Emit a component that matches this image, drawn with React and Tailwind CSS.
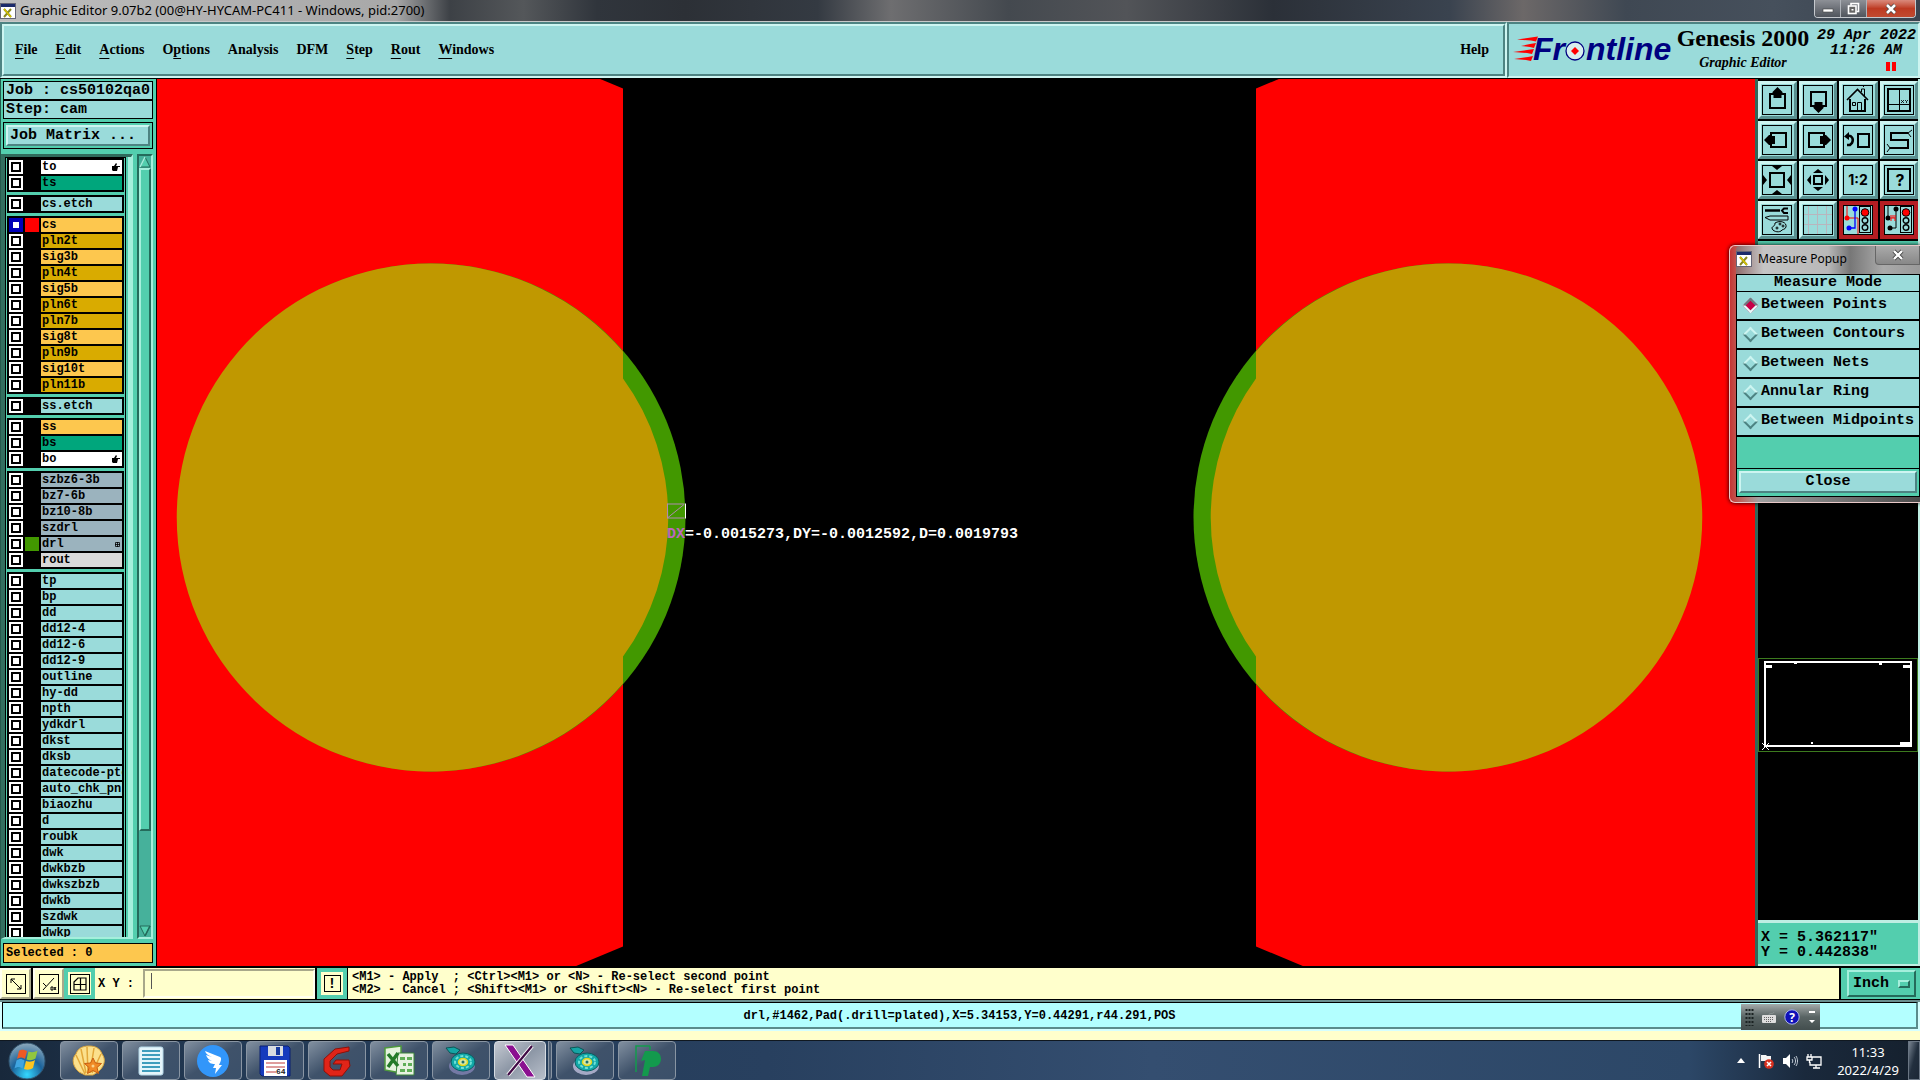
import React, { useState } from "react";

const MONO = "font-['Liberation_Mono',monospace] font-bold";
const SERIF = "font-['Liberation_Serif',serif] font-bold";
const SANS = "font-['Noto_Sans',sans-serif]";
const RAISED = "border-2 border-t-[#cdf5f1] border-l-[#cdf5f1] border-r-[#4d8382] border-b-[#4d8382]";
const SUNKEN = "border-2 border-t-[#4d8382] border-l-[#4d8382] border-r-[#cdf5f1] border-b-[#cdf5f1]";

const menus = [
    { label: "File", key: 0 },
    { label: "Edit", key: 0 },
    { label: "Actions", key: 0 },
    { label: "Options", key: 1 },
    { label: "Analysis", key: -1 },
    { label: "DFM", key: -1 },
    { label: "Step", key: 0 },
    { label: "Rout", key: 0 },
    { label: "Windows", key: 0 },
];

const kinds = {
    white: "bg-white",
    mask: "bg-[#00a67c]",
    misc: "bg-[#9adbda]",
    signal: "bg-[#fdc74e]",
    power: "bg-[#d9ab00]",
    drill: "bg-[#9bb3be]",
    rout: "bg-[#d9d9d9]",
};

const layerGroups = [
    [
        { name: "to", kind: "white", mark: "hand" },
        { name: "ts", kind: "mask" },
    ],
    [{ name: "cs.etch", kind: "misc" }],
    [
        { name: "cs", kind: "signal", color: "bg-[#ff0000]", work: true },
        { name: "pln2t", kind: "power" },
        { name: "sig3b", kind: "signal" },
        { name: "pln4t", kind: "power" },
        { name: "sig5b", kind: "signal" },
        { name: "pln6t", kind: "power" },
        { name: "pln7b", kind: "power" },
        { name: "sig8t", kind: "signal" },
        { name: "pln9b", kind: "power" },
        { name: "sig10t", kind: "signal" },
        { name: "pln11b", kind: "power" },
    ],
    [{ name: "ss.etch", kind: "misc" }],
    [
        { name: "ss", kind: "signal" },
        { name: "bs", kind: "mask" },
        { name: "bo", kind: "white", mark: "hand" },
    ],
    [
        { name: "szbz6-3b", kind: "drill" },
        { name: "bz7-6b", kind: "drill" },
        { name: "bz10-8b", kind: "drill" },
        { name: "szdrl", kind: "drill" },
        { name: "drl", kind: "drill", color: "bg-[#429800]", mark: "grid" },
        { name: "rout", kind: "rout" },
    ],
    [
        "tp", "bp", "dd", "dd12-4", "dd12-6", "dd12-9", "outline", "hy-dd", "npth", "ydkdrl", "dkst", "dksb",
        "datecode-ptc", "auto_chk_pnl", "biaozhu", "d", "roubk", "dwk", "dwkbzb", "dwkszbzb", "dwkb", "szdwk", "dwkp",
    ].map((name) => ({ name, kind: "misc" })),
];

const modes = ["Between Points", "Between Contours", "Between Nets", "Annular Ring", "Between Midpoints"];

function XIcon() {
    return (
        <svg className="h-4 w-4 shrink-0" viewBox="0 0 16 16">
            <rect x="0.5" y="0.5" width="15" height="15" fill="#fff" stroke="#667" />
            <rect x="1" y="1" width="14" height="3" fill="#1b2a6b" />
            <path d="M4 6l7 8M11 6l-7 8" stroke="#8a8a20" strokeWidth="2" />
            <path d="M4 6l7 8" stroke="#d8c400" strokeWidth="1.4" />
        </svg>
    );
}

function TitleBar() {
    return (
        <header className={`${SANS} relative flex h-[22px] shrink-0 items-center border-b border-[#c8c8c8] bg-[#3d4146] text-[13px] text-black`}>
            <div className="flex h-full w-[450px] items-center gap-1 bg-linear-to-r from-[#bdbdbd] via-[#a8a8a8] via-88% to-[#3d4146]">
                <XIcon />
                <h1 className="whitespace-nowrap">Graphic Editor 9.07b2 (00@HY-HYCAM-PC411 - Windows, pid:2700)</h1>
            </div>
            <div className="h-full flex-1 bg-[linear-gradient(90deg,#3d4146_0%,#54575a_5%,#30353c_10%,#2c3036_16%,#343a42_25%,#6e6e70_30%,#44494f_38%,#525458_46%,#2b3038_56%,#3a434f_68%,#6c6868_73%,#3f4853_80%,#46505c_90%,#39434f_100%)]" />
            <div className="absolute top-0 right-1 flex h-[18px] w-[102px] overflow-hidden rounded-b border border-t-0 border-[#c5c9ce]">
                <button aria-label="Minimize" className="flex flex-1 items-center justify-center border-r border-[#aeb2b8] bg-linear-to-b from-[#8d9096] to-[#50555d]">
                    <svg width="14" height="10" viewBox="0 0 14 10"><rect x="2" y="5" width="10" height="3" fill="#fff" stroke="#444" strokeWidth="0.6" /></svg>
                </button>
                <button aria-label="Restore" className="flex flex-1 items-center justify-center border-r border-[#aeb2b8] bg-linear-to-b from-[#8d9096] to-[#50555d]">
                    <svg width="13" height="13" viewBox="0 0 13 13" fill="none" stroke="#fff" strokeWidth="1.6"><path d="M4 3.5V1.5h7.5v8H9.500" /><rect x="1.500" y="4" width="7.500" height="7.500" fill="#666" /><path d="M4.500 7.700h2" /></svg>
                </button>
                <button aria-label="Close window" className="flex w-12 items-center justify-center bg-linear-to-b from-[#d98a7c] via-[#bd3a22] to-[#c04a30]">
                    <svg width="14" height="12" viewBox="0 0 14 12"><path d="M3 2l8 8M11 2l-8 8" stroke="#444" strokeWidth="4" /><path d="M3 2l8 8M11 2l-8 8" stroke="#fff" strokeWidth="2.6" /></svg>
                </button>
            </div>
        </header>
    );
}

function FrontlineLogo() {
    return (
        <svg className="h-9 w-[162px] shrink-0" viewBox="0 0 162 36" role="img" aria-label="Frontline">
            <g fill="#ff0000">
                <path d="M4 7.500L18 5.500l7-1-2 5-5-1z" />
                <path d="M8 14l9-2 6-1-2 5-4-1z" />
                <path d="M0 20l14-2 7-1-2 5-5-1z" />
                <path d="M1 27l14-2 5-1-2 5-5-1z" />
            </g>
            <g fill="#000080" fontFamily="Liberation Sans" fontWeight="bold" fontStyle="italic" fontSize="32">
                <text x="20" y="28">Fr</text>
                <text x="73" y="28">ntline</text>
            </g>
            <circle cx="62" cy="19" r="9" fill="#d8efee" stroke="#000080" strokeWidth="1.300" />
            <path d="M62 15l4 4-4 4-4-4z" fill="#ff0000" />
        </svg>
    );
}

function MenuBar() {
    return (
        <div className="flex h-[57px] shrink-0 border-b border-black bg-[#9adbda]">
            <div className={`${SUNKEN} min-w-0 flex-1`}>
                <nav className={`${RAISED} ${SERIF} flex h-full items-center gap-[18px] pr-3.5 pl-[11px] text-sm text-black`}>
                    {menus.map(({ label, key }) => (
                        <button key={label}>
                            {key < 0 ? label : (
                                <>
                                    {label.slice(0, key)}
                                    <span className="underline underline-offset-4">{label[key]}</span>
                                    {label.slice(key + 1)}
                                </>
                            )}
                        </button>
                    ))}
                    <button className="ml-auto">Help</button>
                </nav>
            </div>
            <div className={`${SUNKEN} flex w-[413px] items-center pl-1`}>
                <FrontlineLogo />
                <div className={`${SERIF} flex w-[136px] shrink-0 flex-col items-center pb-1.5`}>
                    <span className="text-2xl leading-8 whitespace-nowrap">Genesis 2000</span>
                    <span className="text-sm leading-[18px] italic">Graphic Editor</span>
                </div>
                <div className={`${MONO} flex flex-1 flex-col items-end self-start pt-1 pr-0.5 text-[15px] leading-[15px] italic`}>
                    <span className="whitespace-nowrap">29 Apr 2022</span>
                    <span className="pr-3.5">11:26 AM</span>
                    <span className="flex gap-0.5 pt-1 pr-5">
                        <i className="h-[9px] w-1 bg-[#ff0000]" />
                        <i className="h-[9px] w-1 bg-[#ff0000]" />
                    </span>
                </div>
            </div>
        </div>
    );
}

function LayerMark({ type }) {
    if (type === "hand") {
        return (
            <svg className="mr-0.5 h-2 w-2" viewBox="0 0 8 8">
                <path d="M0 3h2l2-3 1 1-1 2h4v1H6l-1 4H1L0 7z" fill="#000" />
            </svg>
        );
    }
    return (
        <svg className="mr-0.5 h-[5px] w-[5px]" viewBox="0 0 5 5">
            <path d="M0.500 0.500h4v4h-4zM2.500 0v5M0 2.500h5" fill="none" stroke="#000" strokeWidth="0.800" />
        </svg>
    );
}

function LayerRow({ layer }) {
    return (
        <li className="flex h-3.5 items-center gap-0.5">
            <input
                type="checkbox"
                aria-label={layer.name}
                className={`h-3.5 w-3.5 shrink-0 appearance-none border-2 bg-[linear-gradient(#fff,#fff)] bg-size-[6px_6px] bg-center bg-no-repeat ${layer.work ? "border-[#0000b8] bg-[#0000b8]" : "border-white bg-black"}`}
            />
            <span className={`h-3.5 w-3.5 shrink-0 ${layer.color || "bg-black"}`} />
            <span className={`flex h-full min-w-0 flex-1 items-center overflow-hidden pl-px ${kinds[layer.kind]}`}>
                <span className="min-w-0 flex-1 overflow-hidden whitespace-nowrap">{layer.name}</span>
                {layer.mark && <LayerMark type={layer.mark} />}
            </span>
        </li>
    );
}

function ArrowIcon({ down }) {
    return (
        <svg className={`h-3 w-3 shrink-0 ${down ? "rotate-180" : ""}`} viewBox="0 0 12 12">
            <path d="M6 1l5 10H1z" fill="#53ceae" stroke="#246b5b" />
            <path d="M6 1L1 11" stroke={down ? "#246b5b" : "#a5efdc"} strokeWidth="1.500" />
        </svg>
    );
}

function LayerPanel() {
    return (
        <aside className={`${MONO} flex w-[157px] shrink-0 flex-col border-r border-l border-r-black border-l-[#24594c] bg-[#53ceae] pt-0.5 text-black`}>
            <div className="mr-[3px] ml-0.5 border border-black bg-[#9adbda] pl-0.5 text-[15px] leading-[17px] whitespace-nowrap">Job : cs50102qa0</div>
            <div className="mr-[3px] ml-0.5 border border-black bg-[#9adbda] pl-0.5 text-[15px] leading-[17px]">Step: cam</div>
            <div className="mt-[3px] mr-[3px] ml-0.5 border border-black p-0.5">
                <button className={`${RAISED} flex h-[21px] w-full items-center bg-[#9adbda] pl-0.5 text-left text-[15px] leading-4`}>Job Matrix ...</button>
            </div>
            <div className="mt-[5px] flex min-h-0 flex-1">
                <div className="flex w-[132px] border-t-[3px] border-r-2 border-b-2 border-l-4 border-t-[#2f6b5c] border-r-[#a5efdc] border-b-[#a5efdc] border-l-[#336f60]">
                    <div className="flex min-w-0 flex-1 flex-col overflow-hidden border-t border-r border-l border-black px-px">
                        {layerGroups.map((group, i) => (
                            <ul key={i} className="mb-[3px] flex shrink-0 flex-col gap-0.5 bg-black p-0.5 text-xs leading-3.5">
                                {group.map((layer) => <LayerRow key={layer.name} layer={layer} />)}
                            </ul>
                        ))}
                    </div>
                    <div className="ml-0.5 w-[3px] bg-[#a5efdc]" />
                </div>
                <div className="ml-1 flex w-4 flex-col items-center border-2 border-t-[#246b5b] border-r-[#a5efdc] border-b-[#a5efdc] border-l-[#246b5b] bg-[#46b19b]">
                    <ArrowIcon />
                    <div className="w-full flex-[665] border-2 border-t-[#a5efdc] border-r-[#246b5b] border-b-[#246b5b] border-l-[#a5efdc] bg-[#53ceae]" />
                    <div className="flex-[95]" />
                    <ArrowIcon down />
                </div>
            </div>
            <div className="mt-1 mr-[3px] mb-[3px] ml-0.5 border border-black bg-[#fdc74e] pl-0.5 text-xs leading-[18px]">Selected : 0</div>
        </aside>
    );
}

function BoardCanvas() {
    return (
        <section className="relative min-w-0 flex-1 overflow-hidden bg-black">
            <svg className="h-full w-full" viewBox="0 0 1598 888" preserveAspectRatio="xMidYMid slice">
                <path d="M0 0H442L466 10V868L418 888H0z" fill="#ff0000" />
                <path d="M1598 0H1123L1099 10V868L1147 888H1598z" fill="#ff0000" />
                <g fill="#429800">
                    <circle cx="274.500" cy="439" r="254" />
                    <circle cx="1290.500" cy="439" r="254" />
                </g>
                {/* overlap of drill and copper */}
                <g fill="#c09800">
                    <path d="M466 273A254 254 0 1 0 466 605V578A236 236 0 0 0 466 300z" />
                    <path d="M1099 273A254 254 0 1 1 1099 605V578A236 236 0 0 1 1099 300z" />
                </g>
                <path d="M510.500 425.500h17M510.500 439.500h17M510.500 425v15M511 439l16-13" fill="none" stroke="#b08ab0" />
                <path d="M528.500 425v15" stroke="#fff" />
            </svg>
            <p className={`${MONO} absolute top-[448px] left-[510px] text-[15px] leading-4 whitespace-nowrap text-white`}>
                <span className="text-[#bd67bd]">DX</span>=-0.0015273,DY=-0.0012592,D=0.0019793
            </p>
        </section>
    );
}

function TrafficLight({ x }) {
    return (
        <g transform={`translate(${x} 0)`}>
            <rect x="0.500" y="1.500" width="11" height="26" fill="#9adbda" stroke="#000" />
            <circle cx="6" cy="7.500" r="3.800" fill="#ff0000" stroke="#000" />
            <circle cx="6" cy="15.500" r="2.800" fill="none" stroke="#000" strokeWidth="1.400" />
            <circle cx="6" cy="22.500" r="2.800" fill="none" stroke="#000" strokeWidth="1.400" />
        </g>
    );
}

const tools = [
    { title: "Pan up", art: <><path d="M8 9h15v14H8z" fill="none" stroke="#000" strokeWidth="2" /><path d="M15.500 2l5 5v1h-1v5h-8V8h-1V7z" /></> },
    { title: "Pan down", art: <><path d="M8 7h15v14H8z" fill="none" stroke="#000" strokeWidth="2" /><path d="M15.500 28l5-5v-1h-1v-5h-8v5h-1v1z" /></> },
    { title: "Home", art: <g fill="none" stroke="#000"><path d="M4 15L14.500 4.500 25 15" strokeWidth="1.600" /><path d="M7 14v12h15V14" strokeWidth="2" /><path d="M18.500 7V4h3v7M20 2l2-2M9.500 17.500h3v3h-3zM14.500 26v-8.500h4V26" /></g> },
    { title: "Zoom XY", art: <><path d="M4 4h22v22H4z" fill="none" stroke="#000" strokeWidth="2" /><path d="M15.500 4v22M4 19.500h22" stroke="#000" /><path d="M17 15l3 3M20 15l-3 3M21 15l1.500 1.500L24 15M22.500 16.500V18" stroke="#000" strokeWidth="0.800" fill="none" /></> },
    { title: "Pan left", art: <><path d="M9 8h15v14H9z" fill="none" stroke="#000" strokeWidth="2" /><path d="M2 15l5-5h1v1h5v8H8v1H7z" /></> },
    { title: "Pan right", art: <><path d="M6 8h15v14H6z" fill="none" stroke="#000" strokeWidth="2" /><path d="M28 15l-5-5h-1v1h-5v8h5v1h1z" /></> },
    { title: "Previous view", art: <g fill="none" stroke="#000" strokeWidth="2"><path d="M15 9h11v13H15z" /><path d="M4 11c5-1 7 3 5 7l-2 2H4" strokeWidth="2.500" /><path d="M1 11.500L6 7v8z" fill="#000" stroke="none" /></g> },
    { title: "Serpentine", art: <g fill="none" stroke="#000"><path d="M24 8H7v7h17v8H6" strokeWidth="2" /><path d="M24 8l4-3M24 8l3 4M6 23l-3-4M6 23l-3 4" /></g> },
    { title: "Zoom in", art: <><path d="M8 8h14v14H8z" fill="none" stroke="#000" strokeWidth="2" /><path d="M10 1h10l-5 4zM10 29h10l-5-4zM1 10v10l4-5zM29 10v10l-4-5z" /></> },
    { title: "Zoom out", art: <><path d="M11 11h8v8h-8z" fill="none" stroke="#000" strokeWidth="2" /><path d="M10 8h10l-5-4zM10 22h10l-5 4zM8 10v10l-4-5zM22 10v10l4-5z" /></> },
    { title: "Scale", art: <text x="15" y="20" textAnchor="middle" fontFamily="Inter" fontWeight="bold" fontSize="14">1:2</text> },
    { title: "Help topics", art: <><path d="M4 4h22v22H4z" fill="none" stroke="#000" strokeWidth="2" /><text x="16" y="21" textAnchor="middle" fontFamily="Inter" fontWeight="bold" fontSize="16">?</text></> },
    { title: "Settings", art: <g fill="none" stroke="#000"><path d="M3 5.500h15" strokeWidth="2.500" /><path d="M26 3.500h-4l-2 2 2 2.500h4" strokeWidth="2" /><path d="M3 12.500l5-1.500h18v4H8z" /><path d="M13 18c5-3 12-1 11 4-1 3-4 2-5 4-3 2-9 0-9-3 0-2 3-1 3-5z" /><circle cx="18" cy="19" r="1" /><circle cx="21" cy="21" r="1" /><circle cx="15" cy="23" r="1" /></g> },
    { title: "Grid", art: <path d="M5.500 1v28M14.500 1v28M23.500 1v28M1 9.500h28M1 19.500h28" stroke="#b9b5bd" /> },
    { title: "Net compare", red: true, art: <><path d="M4 1v12h11v16" fill="none" stroke="#ff0000" /><path d="M12 4v19H7" fill="none" stroke="#0000ff" strokeWidth="1.300" /><circle cx="12" cy="4" r="2.500" fill="#0000ff" /><circle cx="4" cy="13" r="2.500" fill="#ff0000" /><circle cx="6" cy="23" r="2.500" fill="#0000ff" /><TrafficLight x={16} /></> },
    { title: "Spacing check", red: true, art: <><path d="M4 1v12M12 4v19H6" fill="none" stroke="#000" /><circle cx="12" cy="4" r="2.500" /><circle cx="4" cy="13" r="2.500" /><circle cx="6" cy="23" r="2.500" /><path d="M7 13h4M7 10v6M9 10v3M11 10v6" stroke="#ff0000" fill="none" /><TrafficLight x={16} /></> },
];

function ToolPanel() {
    return (
        <aside className="flex w-[165px] shrink-0 flex-col border-r-2 border-l-[3px] border-r-[#bfeee3] border-l-[#31685a] bg-black text-black">
            <div className="grid grid-cols-4 gap-0.5 border-b-4 border-[#53ceae] bg-black pt-0.5 pb-0.5">
                {tools.map((tool) => (
                    <button
                        key={tool.title}
                        aria-label={tool.title}
                        className={`flex h-[38px] items-center justify-center border-[3px] ${tool.red ? "border-[#b51d22] bg-[#b51d22]" : "border-t-[#cdf5f1] border-r-[#5a9090] border-b-[#5a9090] border-l-[#cdf5f1] bg-[#9adbda]"}`}
                    >
                        <svg className={`h-[30px] w-[30px] shrink-0 ${tool.red ? "bg-[#9adbda]" : ""}`} viewBox="0 0 30 30">
                            {tool.art}
                            <rect x="0.500" y="0.500" width="29" height="29" fill="none" stroke="#000" />
                        </svg>
                    </button>
                ))}
            </div>
            <div className="flex flex-1 flex-col justify-end bg-black pb-[168px]">
                <svg className="w-full" viewBox="0 0 160 94">
                    <rect x="0.500" y="0.500" width="159" height="93" fill="none" stroke="#3c7a1e" />
                    <rect x="7" y="4" width="146" height="84" fill="none" stroke="#fff" strokeWidth="2" />
                    <path d="M8 7h6v3H8zM145 7h8v3h-8zM142 84h12v5h-12zM36 4h3v2h-3zM121 4h3v3h-3zM53 84h2v2h-2z" fill="#fff" />
                    <path d="M4 85l7 7M11 85l-7 7" stroke="#fff" />
                </svg>
            </div>
            <div className={`${MONO} h-[46px] border-t-[3px] border-b-2 border-t-[#bfeee3] border-b-[#bfeee3] bg-[#53ceae] pt-[7px] pl-[3px] text-[15px] leading-[15px] whitespace-pre`}>
                <p>X = 5.362117"</p>
                <p>Y = 0.442838"</p>
            </div>
        </aside>
    );
}

function MeasurePopup() {
    const [mode, setMode] = useState(modes[0]);

    return (
        <div role="dialog" aria-label="Measure Popup" className="absolute top-[245px] right-0 w-[191px] rounded-l-md border border-r-0 border-[#e8c8c8] bg-linear-to-r from-[#c53434] via-[#a0a0a0] via-15% to-[#4b4b4b] pb-[5px] pl-1.5 shadow-[0_0_4px_#000]">
            <div className={`${SANS} relative flex h-7 items-center gap-1.5 rounded-tl bg-[linear-gradient(90deg,#8f6b6b_0%,#c5c5c5_15%,#b8b8b8_50%,#777_62%,#aaa_80%,#999_100%)] pb-0.5 text-xs text-black`}>
                <XIcon />
                <h2>Measure Popup</h2>
                <button aria-label="Close popup" className="absolute top-0 right-0 flex h-[19px] w-[45px] items-center justify-center rounded-bl border border-t-0 border-[#666] bg-linear-to-b from-[#aaa] to-[#888]">
                    <svg width="12" height="12" viewBox="0 0 12 12"><path d="M2 2l8 8M10 2l-8 8" stroke="#444" strokeWidth="4" /><path d="M2 2l8 8M10 2l-8 8" stroke="#fff" strokeWidth="2.400" /></svg>
                </button>
            </div>
            <div className={`${MONO} border border-black bg-[#53ceae] text-[15px] text-black`}>
                <fieldset className="divide-y-2 divide-black border-b-2 border-black bg-[#9adbda]">
                    <legend className="w-full border-b border-black bg-[#9adbda] text-center leading-4">Measure Mode</legend>
                    {modes.map((m) => (
                        <label key={m} className="flex h-[29px] items-center gap-[5px] pl-2 whitespace-nowrap last:h-[27px]">
                            <input
                                type="radio"
                                name="mode"
                                checked={mode === m}
                                onChange={() => setMode(m)}
                                className="h-[11px] w-[11px] shrink-0 rotate-45 appearance-none border-2 border-t-[#cdf5f1] border-r-[#4d8382] border-b-[#4d8382] border-l-[#cdf5f1] checked:border-t-[#6b7c80] checked:border-r-[#e8fbfa] checked:border-b-[#e8fbfa] checked:border-l-[#6b7c80] checked:bg-[#c70048]"
                            />
                            {m}
                        </label>
                    ))}
                </fieldset>
                <div className="mt-[31px] border-t border-black p-0.5">
                    <button className={`${RAISED} h-[22px] w-full bg-[#9adbda] leading-4`}>Close</button>
                </div>
            </div>
        </div>
    );
}

function CommandBar() {
    const snap = "flex w-[31px] items-center justify-center border-2 border-t-[#fffff0] border-r-[#a8a88a] border-b-[#a8a88a] border-l-[#fffff0] bg-[#ffffcc]";

    return (
        <div className={`${MONO} flex h-[34px] shrink-0 gap-0.5 border-t-2 border-b border-black bg-black text-xs text-black`}>
            <button aria-label="Snap off" className={snap}>
                <svg width="20" height="20" viewBox="0 0 20 20" fill="none" stroke="#000"><rect x="0.500" y="0.500" width="19" height="19" /><path d="M5 5l10 10M5 9V5h4M15 11v4h-4" /></svg>
            </button>
            <button aria-label="Snap on" className={snap}>
                <svg width="20" height="20" viewBox="0 0 20 20" fill="none" stroke="#000"><rect x="0.500" y="0.500" width="19" height="19" /><path d="M4 16L15 4M4 9l3 3M12 13h2v3h-2zM15 13l2 3M17 13l-2 3" /></svg>
            </button>
            <button aria-label="Snap grid" className="-ml-0.5 flex w-[31px] items-center justify-center border-4 border-[#53ceae] bg-[#ffffcc]">
                <svg className="shrink-0" width="20" height="20" viewBox="0 0 20 20" fill="none" stroke="#000"><rect x="0.500" y="0.500" width="19" height="19" /><path d="M4 8l4-4h8v12H4zM4 10.500h12M10.500 4v12" strokeWidth="1.200" /></svg>
            </button>
            <div className="-ml-0.5 flex items-center bg-[#ffffcc]">
                <label htmlFor="xy" className="w-12 pl-[3px] whitespace-nowrap">X Y :</label>
                <input id="xy" type="text" className="h-[29px] w-[172px] border-2 border-t-[#a8a88a] border-r-[#fffff0] border-b-[#fffff0] border-l-[#a8a88a] bg-[#ffffcc] bg-[linear-gradient(#555,#555)] bg-size-[1px_16px] bg-position-[6px_2px] bg-no-repeat px-1 outline-none" />
            </div>
            <button aria-label="Messages" className="flex w-[30px] items-center justify-center border-4 border-[#53ceae] bg-[#ffffcc]">
                <span className="flex h-[17px] w-[17px] shrink-0 items-center justify-center border border-black text-sm leading-none">!</span>
            </button>
            <div className="-ml-px flex min-w-0 flex-1 flex-col justify-center bg-[#ffffcc] pl-1 leading-[13px] whitespace-pre">
                <p>{"<M1> - Apply  ; <Ctrl><M1> or <N> - Re-select second point"}</p>
                <p>{"<M2> - Cancel ; <Shift><M1> or <Shift><N> - Re-select first point"}</p>
            </div>
            <div className="w-[79px] bg-[#53ceae] py-0.5 pr-1 pl-1.5">
                <button className="flex h-full w-full items-center justify-between border-2 border-t-[#a5efdc] border-r-[#246b5b] border-b-[#246b5b] border-l-[#a5efdc] pr-1 pl-1 text-[15px]">
                    Inch
                    <i className="h-2 w-3 border-2 border-t-[#a5efdc] border-r-[#246b5b] border-b-[#246b5b] border-l-[#a5efdc]" />
                </button>
            </div>
        </div>
    );
}

function LanguageBar() {
    return (
        <div className="absolute top-1 right-[100px] flex h-[26px] w-[79px] items-center justify-between bg-linear-to-b from-[#a5abab] via-[#596464] to-[#434e4e] px-1">
            <svg width="9" height="18" viewBox="0 0 9 18"><path d="M1.500 1v17M4.500 1v17M7.500 1v17" stroke="#1b2222" strokeWidth="2" strokeDasharray="2 2" /></svg>
            <svg width="14" height="12" viewBox="0 0 14 12"><path d="M7 4c0-3 4 0 5-3" fill="none" stroke="#8b9393" /><rect y="4" width="14" height="8" rx="1" fill="#dedede" /><path d="M2 6.500h10M2 8.500h10M4 10.500h6" stroke="#666" strokeDasharray="1 1" /></svg>
            <svg width="16" height="16" viewBox="0 0 16 16"><circle cx="8" cy="8" r="7.200" fill="#1010b8" stroke="#aab4e8" /><text x="8" y="12.500" textAnchor="middle" fill="#fff" fontFamily="Open Sans" fontWeight="bold" fontSize="12">?</text></svg>
            <svg width="8" height="16" viewBox="0 0 8 16" fill="#fff"><path d="M1 2h6v2H1zM1 11h6l-3 3z" /></svg>
        </div>
    );
}

function StatusBar() {
    return (
        <div className="relative h-10 shrink-0 bg-[#ffffcc]">
            <div className="h-[31px] border-t-2 border-[#6b8f8f] bg-[#d5ffff] pb-0.5">
                <div className={`${MONO} mx-0.5 flex h-full items-center justify-center border border-r-2 border-b-2 border-t-black border-r-[#5a8c8c] border-b-[#5a8c8c] border-l-black bg-[#b3ffff] pt-0.5 text-xs text-black`}>
                    drl,#1462,Pad(.drill=plated),X=5.34153,Y=0.44291,r44.291,POS
                </div>
            </div>
            <LanguageBar />
        </div>
    );
}

function DiskIcon({ tail }) {
    return (
        <svg width="32" height="32" viewBox="0 0 32 32">
            <path d="M1 3l8-1 6 3-4 4-6-1z" fill="#15a5a5" stroke="#0a5555" />
            <ellipse cx="17" cy="21" rx="13" ry="9" fill={tail ? "#a5a9c5" : "#7479a5"} />
            <ellipse cx="18" cy="17" rx="12" ry="9" fill="#12a8a8" stroke="#0b5c60" />
            <ellipse cx="18" cy="17" rx="8" ry="6" fill="none" stroke="#6fe0d5" strokeWidth="2" strokeDasharray="3 2" />
            <ellipse cx="18" cy="17" rx="4.500" ry="3.500" fill="#d8e8a5" stroke="#e3d51b" strokeWidth="1.500" />
            <circle cx="18" cy="17" r="1.500" fill="#1c7070" />
        </svg>
    );
}

const apps = [
    { title: "Shell", icon: <svg width="34" height="32" viewBox="0 0 34 32"><path d="M7 27C1 22-1 14 4 9 6 3 11 1 17 1s11 2 13 8c4 5 3 12-4 18l-5 3h-8z" fill="#fbe08c" stroke="#dba63e" /><path d="M13 29L4 10M14 28L9 4M16 28L15 2M18 28L22 3M20 28L29 9" stroke="#e2a83a" strokeWidth="1.500" /><path d="M21 13l2.500 5 6 .5-4.500 4 1.500 6-5.500-3-5.500 3 1.500-6-4.500-4 6-.5z" fill="#f08a25" stroke="#c75c10" /><circle cx="21" cy="21" r="1.500" fill="#fbd28a" /></svg> },
    { title: "Notepad", icon: <svg width="28" height="30" viewBox="0 0 28 30"><rect x="2" y="1" width="24" height="28" rx="2" fill="#e5f5fb" stroke="#b5d8e8" /><path d="M5 5h18M5 9h18M5 13h18M5 17h18M5 21h18M5 25h18" stroke="#3f9dbd" strokeWidth="1.800" /></svg> },
    { title: "DingTalk", icon: <svg width="32" height="32" viewBox="0 0 32 32"><circle cx="16" cy="16" r="16" fill="#3296fa" /><path d="M8 6l15 6c2 1 1 4-1 8h3l-7 9 1-6h-3l2-4c-4 0-6-1-7-4l4 1c-3-1-5-3-6-6l6 2c-4-2-6-3-7-6z" fill="#fff" /></svg> },
    { title: "Floppy", icon: <svg width="32" height="32" viewBox="0 0 32 32"><path d="M1 1h28l2 2v28H3l-2-2z" fill="#163bbd" stroke="#0b2070" /><path d="M9 1h15v10H9z" fill="#d8dce0" /><path d="M17 2h4v8h-4z" fill="#173a9e" /><path d="M5 15h23v16H5z" fill="#fff" /><path d="M7 18h19M7 22h19M7 27h10" stroke="#bd3b3b" /><text x="17" y="29" fill="#222" fontFamily="Liberation Mono" fontWeight="bold" fontSize="8">64</text></svg> },
    { title: "Genesis", icon: <svg width="32" height="32" viewBox="0 0 32 32"><path d="M28 2L14 4 3 14v12l6 5h12l8-10-1-6H15l-3 4h9l-2 6h-7l-3-3v-6l7-7 12-3z" fill="#e02418" stroke="#8d1009" strokeLinejoin="round" /></svg> },
    { title: "Excel", icon: <svg width="32" height="32" viewBox="0 0 32 32"><path d="M2 3l16-2v27L2 25z" fill="#e5f3dd" stroke="#4d9a3c" strokeWidth="1.500" /><path d="M15 8h16v22H13z" fill="#e8f2e2" stroke="#388338" /><path d="M17 12h5v3h-5zM24 12h5v3h-5zM20 18h3v3h-3zM25 18h4v3h-4zM17 24h5v3h-5zM24 24h5v3h-5z" fill="#5fae57" /><path d="M5 9l10 12M15 8L5 22" stroke="#247a29" strokeWidth="3.500" /></svg> },
    { title: "Disk", icon: <DiskIcon /> },
    { title: "Exceed", active: true, icon: <svg width="34" height="34" viewBox="0 0 34 34"><path d="M2 1h8l22 32h-8z" fill="#8b1090" stroke="#fff" /><path d="M29 2L5 31" stroke="#fff" strokeWidth="4" /><path d="M29 2L5 31" stroke="#400a45" strokeWidth="2.200" /></svg> },
    { title: "Disk tools", icon: <DiskIcon tail /> },
    { title: "Press", icon: <svg width="32" height="34" viewBox="0 0 32 34"><path d="M14 7h8c5 0 8 3 8 8s-4 8-8 8h-3l-2 9h-6l3-16-4 1z" fill="#139a4d" /><path d="M19 2H5v26M19 2v4" fill="none" stroke="#139a4d" strokeWidth="1.500" /></svg> },
];

function Taskbar() {
    return (
        <footer className={`${SANS} flex h-10 shrink-0 items-center border-t border-[#101820] bg-[linear-gradient(90deg,#18283b_0%,#233a55_12%,#28405f_40%,#344e70_60%,#2c4767_88%,#1a293c_94%,#15202d_100%)] text-[13px] text-white`}>
            <button aria-label="Start" className="ml-2 flex shrink-0 items-center justify-center">
                <svg width="38" height="38" viewBox="0 0 38 38">
                    <defs>
                        <radialGradient id="orb" cx="50%" cy="88%" r="88%">
                            <stop offset="0" stopColor="#34d7ff" />
                            <stop offset="0.500" stopColor="#1b639b" />
                            <stop offset="1" stopColor="#8ea9bb" />
                        </radialGradient>
                    </defs>
                    <circle cx="19" cy="19" r="18" fill="url(#orb)" stroke="#31536d" />
                    <path d="M11 9c3-2 5-1 8 0l-2 8c-3-2-5-2-8 0z" fill="#ed5a24" />
                    <path d="M20.500 9.500c3 1 6 1 9-1l-2 8c-3 2-6 2-9 1z" fill="#91c73e" />
                    <path d="M8.500 18.500c3-2 5-2 8 0l-2 8c-3-2-5-2-8 0z" fill="#40a5e0" />
                    <path d="M18 19c3 1 6 1 9-1l-2 8c-3 2-6 2-9 1z" fill="#fcc51f" />
                </svg>
            </button>
            <div className="ml-3.5 flex h-full gap-1">
                {apps.map((app) => (
                    <div key={app.title} className={`flex h-full w-[58px] ${app.active ? "gap-0.5" : ""}`}>
                        <button
                            aria-label={app.title}
                            className={`flex flex-1 items-center justify-center rounded-sm border bg-linear-to-br ${app.active ? "border-[#d5dbe2] from-[#c5cad2] via-[#8d97a6] to-[#b8bfca]" : "border-[#8995a3] from-[#8290a0] via-[#3f526a] to-[#3b506a]"}`}
                        >
                            {app.icon}
                        </button>
                        {app.active && <i className="w-1 rounded-r border-r border-l border-[#8995a3] bg-[#4b5c72]" />}
                    </div>
                ))}
            </div>
            <div className="ml-auto flex h-full items-center">
                <svg className="mr-[13px]" width="8" height="5" viewBox="0 0 8 5"><path d="M4 0l4 5H0z" fill="#fff" /></svg>
                <svg className="mr-2" width="16" height="16" viewBox="0 0 16 16"><path d="M1.500 1v14" stroke="#fff" strokeWidth="1.500" /><path d="M3 2h5l1 1h4v6H8L7 8H3z" fill="#f5f5f5" /><circle cx="11" cy="11" r="4.800" fill="#d8301f" /><path d="M9 9l4 4M13 9l-4 4" stroke="#fff" strokeWidth="1.500" /></svg>
                <svg className="mr-2" width="16" height="16" viewBox="0 0 16 16"><path d="M1 5h3l4-4v14l-4-4H1z" fill="#fff" /><path d="M10 6c1 1 1 3 0 4M12 4c2 2 2 6 0 8M14 3c2 3 2 7 0 10" fill="none" stroke="#d5dde5" strokeWidth="0.900" /></svg>
                <svg width="16" height="16" viewBox="0 0 16 16" fill="none" stroke="#fff" strokeWidth="1.300"><path d="M6 4h9v8H4V9M7 15h7M10 12v3M2 1v3M5 1v3M1 4h5v3H1zM3.500 7v3" /></svg>
                <time className="flex w-[84px] flex-col items-center pl-2 leading-[18px]">
                    <span>11:33</span>
                    <span>2022/4/29</span>
                </time>
                <button aria-label="Show desktop" className="ml-0.5 h-full w-3 border border-[#6a7684] bg-linear-to-br from-[#7a8592] via-[#222f3e] to-[#1b2735]" />
            </div>
        </footer>
    );
}

export default function App() {
    return (
        <div className="relative flex h-screen flex-col overflow-hidden bg-black">
            <TitleBar />
            <MenuBar />
            <main className="flex min-h-0 flex-1">
                <LayerPanel />
                <BoardCanvas />
                <ToolPanel />
            </main>
            <CommandBar />
            <StatusBar />
            <Taskbar />
            <MeasurePopup />
        </div>
    );
}
